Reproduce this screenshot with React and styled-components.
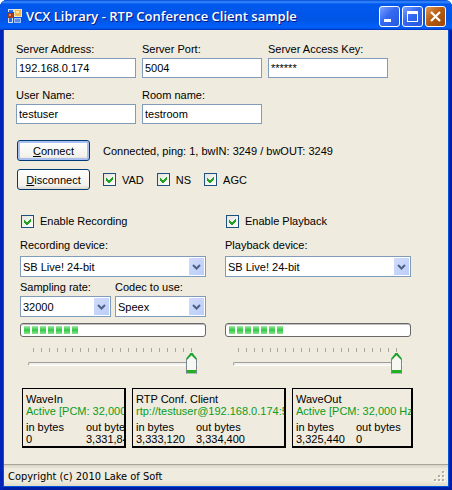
import React, { useState } from "react";
import styled, { createGlobalStyle } from "styled-components";

const GlobalStyle = createGlobalStyle`
  * {
    box-sizing: border-box;
  }
  body {
    margin: 0;
    background: #ffffff;
    color: #000000;
    font-family: "Liberation Sans", Arial, sans-serif;
    font-size: 11px;
    line-height: 14px;
  }
  input, select, button {
    font: inherit;
    color: inherit;
  }
`;

const BLOCKS = [
  {
    name: "WaveIn",
    status: "Active [PCM: 32,000 Hz;",
    inBytes: "0",
    outBytes: "3,331,840",
  },
  {
    name: "RTP Conf. Client",
    status: "rtp://testuser@192.168.0.174:5004",
    inBytes: "3,333,120",
    outBytes: "3,334,400",
  },
  {
    name: "WaveOut",
    status: "Active [PCM: 32,000 Hz;",
    inBytes: "3,325,440",
    outBytes: "0",
  },
];

const TextField = ({ label, id, value }) => {
  return (
    <Field>
      <label htmlFor={id}>{label}</label>
      <Input id={id} type="text" defaultValue={value} />
    </Field>
  );
};

const SelectField = ({ label, id, options, roomy }) => {
  return (
    <Field $roomy={roomy}>
      <label htmlFor={id}>{label}</label>
      <SelectBox>
        <Select id={id}>
          {options.map((o) => (
            <option key={o}>{o}</option>
          ))}
        </Select>
        <Arrow>
          <svg width="9" height="6" viewBox="0 0 9 6">
            <path d="M1 1l3.5 3.5L8 1" fill="none" stroke="#4d6185" strokeWidth="2" />
          </svg>
        </Arrow>
      </SelectBox>
    </Field>
  );
};

const Check = ({ label }) => {
  const [checked, setChecked] = useState(true);

  return (
    <CheckLabel>
      <CheckBox>
        <CheckInput
          type="checkbox"
          checked={checked}
          onChange={(e) => setChecked(e.target.checked)}
        />
        {checked && (
          <CheckMark width="7" height="7" viewBox="0 0 7 7" shapeRendering="crispEdges">
            <path d="M0 2v3l2 2h1l4-4V0L3 4H2z" fill="#21a121" />
          </CheckMark>
        )}
      </CheckBox>
      {label}
    </CheckLabel>
  );
};

const Volume = ({ label }) => {
  return (
    <VolumeBox>
      <Ticks>
        {Array.from({ length: 21 }, (_, i) => (
          <Tick key={i} />
        ))}
      </Ticks>
      <SliderBox>
        <Slider type="range" min="0" max="20" defaultValue="20" aria-label={label} />
      </SliderBox>
    </VolumeBox>
  );
};

const Meter = ({ label, level }) => {
  return (
    <MeterBox role="meter" aria-label={label} aria-valuenow={level}>
      {Array.from({ length: level }, (_, i) => (
        <Chunk key={i} />
      ))}
    </MeterBox>
  );
};

const App = () => {
  return (
    <>
      <GlobalStyle />
      <Window>
        <TitleBar>
          <svg width="14" height="14" viewBox="0 0 14 14" shapeRendering="crispEdges">
            <path d="M0 0h6v3H0zM0 8h5v6H0z" fill="#cfe0fa" />
            <path d="M1 1h4v2H1zM1 9h3v4H1z" fill="#2a6cf0" />
            <path d="M0 4h5v5H0z" fill="#a33a22" />
            <path d="M1 5h2v2H1z" fill="#e08a68" />
            <path d="M6 0h8v8H6z" fill="#f5e6b8" />
            <path d="M7 1h6v6H7z" fill="#f0b850" />
            <path d="M8 2h3v2H8z" fill="#ffe6a8" />
            <path d="M6 9h7v5H6z" fill="#9fc0f5" />
            <path d="M7 10h5v3H7z" fill="#5a8ce4" />
          </svg>
          <Title>VCX Library - RTP Conference Client sample</Title>
          <CaptionButton aria-label="Minimize">
            <svg width="19" height="19" viewBox="0 0 19 19" shapeRendering="crispEdges">
              <path d="M4 12h7v3H4z" fill="#fff" />
            </svg>
          </CaptionButton>
          <CaptionButton aria-label="Maximize">
            <svg width="19" height="19" viewBox="0 0 19 19" shapeRendering="crispEdges">
              <path d="M4 4h11v11H4zM5 7v7h9V7z" fill="#fff" fillRule="evenodd" />
            </svg>
          </CaptionButton>
          <CaptionButton aria-label="Close" $close>
            <svg width="19" height="19" viewBox="0 0 19 19">
              <path d="M5 5l9 9M14 5l-9 9" stroke="#fff" strokeWidth="2.2" />
            </svg>
          </CaptionButton>
        </TitleBar>

        <Client>
          <Server>
            <TextField id="address" label="Server Address:" value="192.168.0.174" />
            <TextField id="port" label="Server Port:" value="5004" />
            <TextField id="key" label="Server Access Key:" value="******" />
            <TextField id="user" label="User Name:" value="testuser" />
            <TextField id="room" label="Room name:" value="testroom" />
          </Server>

          <Actions>
            <Row>
              <Button $primary>
                <u>C</u>onnect
              </Button>
              <span>Connected, ping: 1, bwIN: 3249 / bwOUT: 3249</span>
            </Row>
            <Row>
              <Button>
                <u>D</u>isconnect
              </Button>
              <Check label="VAD" />
              <Check label="NS" />
              <Check label="AGC" />
            </Row>
          </Actions>

          <Devices>
            <Device>
              <Check label="Enable Recording" />
              <SelectField
                id="recording"
                label="Recording device:"
                options={["SB Live! 24-bit"]}
                roomy
              />
              <Pair>
                <SelectField id="rate" label="Sampling rate:" options={["32000", "16000", "8000"]} />
                <SelectField id="codec" label="Codec to use:" options={["Speex", "PCM"]} />
              </Pair>
              <Levels>
                <Meter label="Recording level" level={7} />
                <Volume label="Recording volume" />
              </Levels>
            </Device>
            <Device>
              <Check label="Enable Playback" />
              <SelectField
                id="playback"
                label="Playback device:"
                options={["SB Live! 24-bit"]}
                roomy
              />
              <Levels>
                <Meter label="Playback level" level={7} />
                <Volume label="Playback volume" />
              </Levels>
            </Device>
          </Devices>

          <Blocks>
            {BLOCKS.map((b) => (
              <Block key={b.name}>
                <div>{b.name}</div>
                <Status>{b.status}</Status>
                <Bytes>
                  <dt>in bytes</dt>
                  <dt>out bytes</dt>
                  <dd>{b.inBytes}</dd>
                  <dd>{b.outBytes}</dd>
                </Bytes>
              </Block>
            ))}
          </Blocks>
        </Client>

        <StatusBar>
          <span>Copyright (c) 2010 Lake of Soft</span>
          <svg width="12" height="12" viewBox="0 0 12 12" shapeRendering="crispEdges">
            <path
              d="M9 1h2v2H9zM5 5h2v2H5zM9 5h2v2H9zM1 9h2v2H1zM5 9h2v2H5zM9 9h2v2H9z"
              fill="#fff"
            />
            <path
              d="M8 0h2v2H8zM4 4h2v2H4zM8 4h2v2H8zM0 8h2v2H0zM4 8h2v2H4zM8 8h2v2H8z"
              fill="#b3af9e"
            />
          </svg>
        </StatusBar>
      </Window>
    </>
  );
};

const Window = styled.div`
  display: flex;
  flex-direction: column;
  min-height: 100vh;
  padding: 0 4px 4px;
  overflow: hidden;
  border-radius: 7px 7px 0 0;
  background: #0054e3;
  box-shadow: inset 3px 0 #0024b8, inset -3px -3px #001ea0;
`;

const TitleBar = styled.header`
  display: flex;
  align-items: center;
  gap: 2px;
  height: 30px;
  margin: 0 -4px;
  padding: 3px 6px 0 8px;
  border-bottom: 1px solid #003cc8;
  background: linear-gradient(
    #0048d8 0,
    #3a8cff 2px,
    #0058ee 4px,
    #0055e5 20px,
    #0060fc 27px,
    #0048d0 30px
  );
`;

const Title = styled.h1`
  flex: 1;
  margin: 0 0 0 2px;
  white-space: nowrap;
  font-family: "Open Sans", "Trebuchet MS", sans-serif;
  font-size: 13px;
  line-height: 20px;
  font-weight: 600;
  color: #ffffff;
  text-shadow: 1px 1px #0a1883;
`;

const CaptionButton = styled.button`
  display: flex;
  flex: none;
  width: 21px;
  height: 21px;
  padding: 0;
  border: 1px solid #ffffff;
  border-radius: 3px;
  background: ${({ $close }) =>
    $close
      ? "linear-gradient(135deg, #e09858, #b85c10 45%, #98480c)"
      : "linear-gradient(135deg, #7aa0ff, #3468f0 45%, #2458e0)"};
`;

const Client = styled.main`
  flex: 1;
  padding-top: 12px;
  background: #efebde;
`;

const Server = styled.section`
  display: grid;
  grid-template-columns: repeat(3, minmax(0, 1fr));
  gap: 10px 6px;
  padding: 0 60px 0 12px;
`;

const Field = styled.div`
  display: flex;
  flex-direction: column;
  gap: ${({ $roomy }) => ($roomy ? "4px" : "2px")};
  min-width: 0;
  white-space: nowrap;
`;

const Input = styled.input`
  width: 100%;
  height: 20px;
  padding: 0 2px;
  border: 1px solid #7f9db9;
  border-radius: 0;
  background: #ffffff;
`;

const Actions = styled.section`
  display: flex;
  flex-direction: column;
  gap: 8px;
  padding: 16px 13px 0;
`;

const Row = styled.div`
  display: flex;
  align-items: center;
  gap: 13px;
`;

const Button = styled.button`
  width: 73px;
  height: 21px;
  padding: 0;
  border: 1px solid #003c74;
  border-radius: 3px;
  background: linear-gradient(#ffffff, #f3f2ec 80%, #dcd8cc);
  box-shadow: ${({ $primary }) =>
    $primary ? "inset 0 0 0 2px #a8bff0" : "none"};
`;

const CheckLabel = styled.label`
  display: flex;
  align-items: center;
  gap: 6px;
`;

const CheckBox = styled.span`
  position: relative;
  width: 13px;
  height: 13px;
`;

const CheckInput = styled.input`
  display: block;
  width: 13px;
  height: 13px;
  margin: 0;
  appearance: none;
  border: 1px solid #1c5180;
  background: linear-gradient(135deg, #e4e4dc, #ffffff);
`;

const CheckMark = styled.svg`
  position: absolute;
  top: 3px;
  left: 3px;
  pointer-events: none;
`;

const Devices = styled.section`
  display: grid;
  grid-template-columns: repeat(2, minmax(0, 1fr));
  gap: 19px;
  padding: 24px 37px 0 16px;
`;

const Device = styled.div`
  display: flex;
  flex-direction: column;
  gap: 3px;

  > ${CheckLabel} {
    margin: 0 0 7px 1px;
  }
`;

const Pair = styled.div`
  display: grid;
  grid-template-columns: repeat(2, minmax(0, 1fr));
  gap: 4px;
`;

const SelectBox = styled.div`
  position: relative;
`;

const Select = styled.select`
  display: block;
  width: 100%;
  height: 21px;
  padding: 0 18px 0 2px;
  appearance: none;
  border: 1px solid #7f9db9;
  border-radius: 0;
  background: #ffffff;
`;

const Arrow = styled.span`
  position: absolute;
  top: 2px;
  right: 2px;
  display: flex;
  align-items: center;
  justify-content: center;
  width: 15px;
  height: 17px;
  background: linear-gradient(135deg, #d0dcfc, #bccdf8);
  pointer-events: none;
`;

const Levels = styled.div`
  margin-top: auto;
  padding-top: 3px;
`;

const MeterBox = styled.div`
  display: flex;
  gap: 2px;
  height: 14px;
  padding: 2px 3px;
  border: 1px solid #686868;
  border-radius: 3px;
  background: #ffffff;
  box-shadow: inset 0 1px #bebebe;
`;

const Chunk = styled.span`
  width: 6px;
  background: linear-gradient(#a4eaa4, #2fc844 50%, #8ce48c);
`;

const VolumeBox = styled.div`
  padding: 11px 8px 0;
`;

const Ticks = styled.div`
  display: flex;
  justify-content: space-between;
  padding: 0 6px 0 5px;
`;

const Tick = styled.span`
  width: 1px;
  height: 4px;
  background: #aaa794;
`;

const SliderBox = styled.div`
  display: flex;
  padding-top: 1px;
`;

const Slider = styled.input`
  width: 100%;
  height: 21px;
  margin: 0;
  appearance: none;
  background: transparent;

  &::-webkit-slider-runnable-track {
    height: 4px;
    border: 1px solid #ffffff;
    border-top-color: #9d9c99;
    border-left-color: #9d9c99;
    border-radius: 2px;
    background: #f3f2ea;
  }

  &::-webkit-slider-thumb {
    width: 11px;
    height: 21px;
    margin-top: -10px;
    appearance: none;
    background:
      linear-gradient(#778892, #778892) 0 100% / 1px 15px no-repeat,
      linear-gradient(#778892, #778892) 100% 100% / 1px 15px no-repeat,
      linear-gradient(#778892, #778892) 0 100% / 100% 1px no-repeat,
      linear-gradient(#21b121, #21b121) 0 17px / 100% 3px no-repeat,
      linear-gradient(135deg, #21a131 5px, transparent 6px),
      linear-gradient(225deg, #21a131 5px, transparent 6px),
      #f7f7f4;
    clip-path: polygon(0 6px, 5px 0, 6px 0, 100% 6px, 100% 100%, 0 100%);
  }
`;

const Blocks = styled.section`
  display: grid;
  grid-template-columns: 104fr 154fr 121fr;
  gap: 6px;
  padding: 14px 35px 15px 18px;
`;

const Block = styled.div`
  min-width: 0;
  height: 60px;
  padding: 4px 0 0 3px;
  overflow: hidden;
  border: solid #000000;
  border-width: 1px 2px 2px 1px;
  white-space: nowrap;
  line-height: 12px;
`;

const Status = styled.div`
  overflow: hidden;
  color: #0c9c1c;
`;

const Bytes = styled.dl`
  display: grid;
  grid-template-columns: 60px 60px;
  margin: 4px 0 0;

  dd {
    margin: 0;
  }
`;

const StatusBar = styled.footer`
  display: flex;
  align-items: center;
  justify-content: space-between;
  height: 22px;
  padding: 2px 2px 0 4px;
  border-top: 1px solid #a8a598;
  background: linear-gradient(#d8d4c4, #efebde 4px, #efebde 16px, #e0dcc8);
  font-family: "DejaVu Sans Condensed", "DejaVu Sans", Tahoma, sans-serif;
`;

export default App;
